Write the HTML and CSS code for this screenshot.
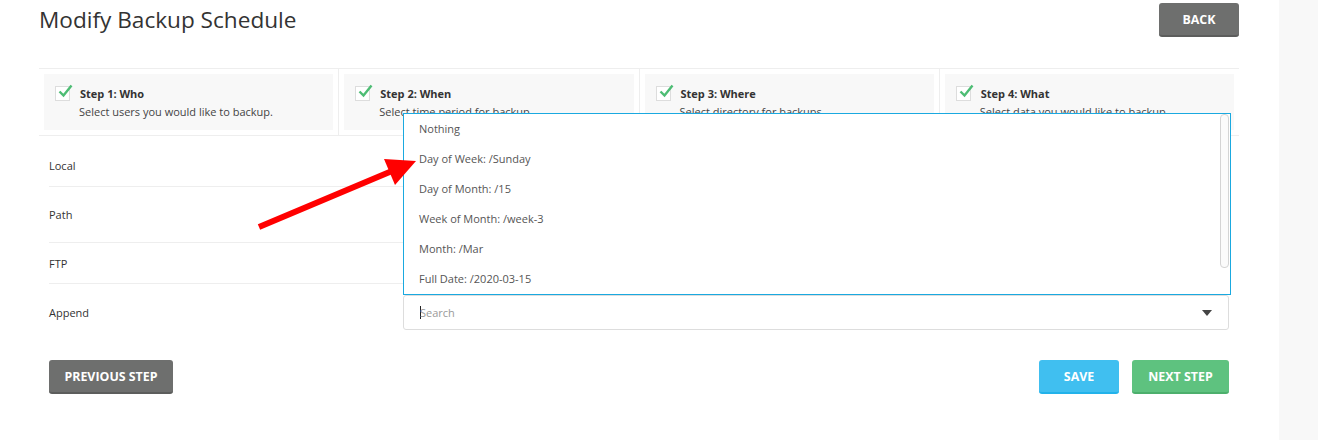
FILE: index.html
```html
<!DOCTYPE html>
<html lang="en">
<head>
    <meta charset="UTF-8" />
    <title>Modify Backup Schedule</title>
    <link rel="stylesheet" href="styles.css">
</head>
<body>
<div class="page">
    <div class="main">
        <div class="header">
            <h1>Modify Backup Schedule</h1>
            <a href="#" class="btn btn-gray btn-back">BACK</a>
        </div>

        <div class="steps">
            <div class="step">
                <div class="step-box">
                    <span class="check"><svg viewBox="0 0 16 16" width="16" height="16"><path d="M2.5 7.5 L6.5 11.5 L14.5 1.5" fill="none" stroke="#4dbd74" stroke-width="2.4"/></svg></span>
                    <div class="step-text">
                        <div class="step-title">Step 1: Who</div>
                        <div class="step-desc">Select users you would like to backup.</div>
                    </div>
                </div>
            </div>
            <div class="step">
                <div class="step-box">
                    <span class="check"><svg viewBox="0 0 16 16" width="16" height="16"><path d="M2.5 7.5 L6.5 11.5 L14.5 1.5" fill="none" stroke="#4dbd74" stroke-width="2.4"/></svg></span>
                    <div class="step-text">
                        <div class="step-title">Step 2: When</div>
                        <div class="step-desc">Select time period for backup.</div>
                    </div>
                </div>
            </div>
            <div class="step">
                <div class="step-box">
                    <span class="check"><svg viewBox="0 0 16 16" width="16" height="16"><path d="M2.5 7.5 L6.5 11.5 L14.5 1.5" fill="none" stroke="#4dbd74" stroke-width="2.4"/></svg></span>
                    <div class="step-text">
                        <div class="step-title">Step 3: Where</div>
                        <div class="step-desc">Select directory for backups.</div>
                    </div>
                </div>
            </div>
            <div class="step">
                <div class="step-box">
                    <span class="check"><svg viewBox="0 0 16 16" width="16" height="16"><path d="M2.5 7.5 L6.5 11.5 L14.5 1.5" fill="none" stroke="#4dbd74" stroke-width="2.4"/></svg></span>
                    <div class="step-text">
                        <div class="step-title">Step 4: What</div>
                        <div class="step-desc">Select data you would like to backup.</div>
                    </div>
                </div>
            </div>
        </div>

        <div class="form">
            <div class="form-row row-local"><span class="label">Local</span></div>
            <div class="form-row row-path"><span class="label">Path</span></div>
            <div class="form-row row-ftp"><span class="label">FTP</span></div>
            <div class="form-row row-append">
                <span class="label">Append</span>
                <div class="field">
                    <div class="select">
                        <span class="cursor"></span>
                        <span class="placeholder">Search</span>
                        <span class="caret"></span>
                    </div>
                    <div class="dropdown">
                        <div class="option">Nothing</div>
                        <div class="option">Day of Week: /Sunday</div>
                        <div class="option">Day of Month: /15</div>
                        <div class="option">Week of Month: /week-3</div>
                        <div class="option">Month: /Mar</div>
                        <div class="option">Full Date: /2020-03-15</div>
                        <span class="scroll-thumb"></span>
                    </div>
                </div>
            </div>
        </div>

        <div class="actions">
            <a href="#" class="btn btn-gray btn-prev">PREVIOUS STEP</a>
            <div class="actions-right">
                <a href="#" class="btn btn-blue btn-save">SAVE</a>
                <a href="#" class="btn btn-green btn-next">NEXT STEP</a>
            </div>
        </div>
    </div>
    <div class="side"></div>

    <!-- annotation arrow drawn over the page -->
    <svg class="annotation" width="1318" height="440" viewBox="0 0 1318 440">
        <line x1="259" y1="227" x2="392" y2="171" stroke="#ff0000" stroke-width="6"/>
        <polygon points="384,159 416,161 395,185" fill="#ff0000"/>
    </svg>
</div>
</body>
</html>
```

FILE: styles.css
```css
body {
    margin: 0;
    font-family: 'Open Sans', 'Noto Sans', sans-serif;
    color: #333;
    background-color: #ffffff;
}

.page {
    position: relative;
    display: flex;
    min-height: 440px;
}

.main {
    width: 1200px;
    padding: 3px 40px 0 39px;
}

.side {
    flex: 1;
    background-color: #f8f8f8;
}

.annotation {
    position: absolute;
    left: 0;
    top: 0;
    pointer-events: none;
}

.header {
    display: flex;
    justify-content: space-between;
    align-items: flex-start;
    height: 34px;
    margin-bottom: 31px;
}

h1 {
    margin: 4px 0 0 0;
    font-size: 22.6px;
    font-weight: 400;
    line-height: 26px;
    color: #333;
}

.btn {
    display: inline-flex;
    align-items: center;
    justify-content: center;
    box-sizing: border-box;
    height: 34px;
    border-radius: 3px;
    color: #fff;
    font-size: 12.4px;
    font-weight: 700;
    text-decoration: none;
    padding-top: 1px;
}

.btn-gray {
    background-color: #6e6f6e;
    border-bottom: 2px solid #5c5d5c;
}

.btn-blue {
    background-color: #40bff0;
    border-bottom: 2px solid #22b2ea;
}

.btn-green {
    background-color: #5ec27f;
    border-bottom: 2px solid #4caf6c;
}

.btn-back { width: 80px; }
.btn-prev { width: 124px; }
.btn-save { width: 80px; }
.btn-next { width: 97px; }

/* steps */
.steps {
    display: flex;
    border-top: 1px solid #eee;
    border-bottom: 1px solid #eee;
}

.step {
    flex: 1;
    padding: 5px;
    border-left: 1px solid #eee;
}

.step:first-child {
    border-left: none;
    padding-left: 5px;
}

.step-box {
    display: flex;
    background-color: #f8f8f8;
    height: 56px;
    box-sizing: border-box;
    padding: 12px 10px 0 11px;
}

.check {
    display: block;
    position: relative;
    width: 13px;
    height: 13px;
    border: 1px solid #ddd;
    background: #fff;
    margin-top: 0;
    margin-right: 10px;
}

.check svg {
    position: absolute;
    left: 1px;
    top: -3px;
}

.step-title {
    font-size: 11px;
    font-weight: 700;
    line-height: 16px;
    color: #333;
}

.step-desc {
    font-size: 11px;
    line-height: 16px;
    color: #444;
    margin-top: 2px;
    margin-left: -1px;
}

/* form rows */
.form {
    padding: 0 10px;
}

.form-row {
    display: flex;
    align-items: center;
    border-bottom: 1px solid #eee;
}

.form-row .label {
    width: 354px;
    font-size: 11px;
    color: #333;
}

.row-local { height: 51px; padding-top: 8px; box-sizing: border-box; }
.row-path { height: 55px; }
.row-ftp { height: 40px; }

.row-append {
    height: 57px;
    border-bottom: none;
}

.field {
    flex: 1;
    position: relative;
}

.select {
    display: flex;
    align-items: center;
    box-sizing: border-box;
    height: 35px;
    border: 1px solid #ddd;
    border-radius: 3px;
    padding: 0 16px 0 16px;
    position: relative;
}

.cursor {
    width: 1px;
    height: 13px;
    background: #222;
    margin-right: -1px;
}

.placeholder {
    font-size: 11px;
    color: #9a9a9a;
    flex: 1;
}

.caret {
    width: 0;
    height: 0;
    border-left: 5px solid transparent;
    border-right: 5px solid transparent;
    border-top: 6px solid #444;
}

.dropdown {
    position: absolute;
    left: 0;
    right: -2px;
    bottom: 100%;
    box-sizing: border-box;
    border: 1px solid #1aa9e0;
    background: #fff;
}

.option {
    height: 30px;
    line-height: 30px;
    padding-left: 15px;
    font-size: 11px;
    color: #555;
}

.scroll-thumb {
    position: absolute;
    right: 1px;
    top: 0;
    width: 7px;
    height: 152px;
    border: 1px solid #d4d4d4;
    border-radius: 4px;
    background: #fbfbfb;
}

.actions {
    display: flex;
    justify-content: space-between;
    padding: 0 10px;
    margin-top: 19px;
}

.actions-right {
    display: flex;
    gap: 13px;
}
```
